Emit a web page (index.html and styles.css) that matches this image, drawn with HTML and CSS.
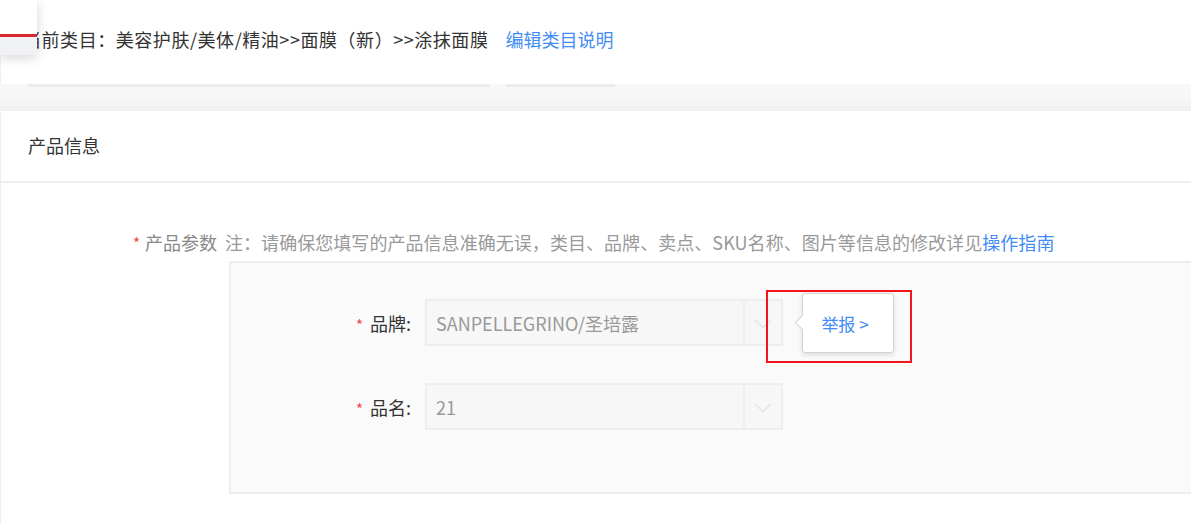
FILE: index.html
```html
<!DOCTYPE html>
<html lang="zh-CN">
<head>
<meta charset="utf-8">
<link rel="stylesheet" href="styles.css">
</head>
<body>
<div class="page">
  <div class="mini-window">
    <div class="mini-top"></div>
    <div class="mini-red"></div>
    <div class="mini-bottom"></div>
  </div>
  <section class="top">
    <div class="crumb">
      <span class="crumb-text">当前类目：美容护肤/美体/精油&gt;&gt;面膜（新）&gt;&gt;涂抹面膜</span>
      <a class="link crumb-link">编辑类目说明</a>
    </div>
  </section>
  <div class="band">
    <div class="bar bar-a"></div>
    <div class="bar bar-b"></div>
  </div>
  <section class="card">
    <div class="card-head">产品信息</div>
    <div class="card-body">
      <div class="note-row">
        <span class="req">*</span>
        <span class="note-label">产品参数</span>
        <span class="note">注：请确保您填写的产品信息准确无误，类目、品牌、卖点、SKU名称、图片等信息的修改详见<a class="link">操作指南</a></span>
      </div>
      <div class="panel">
        <div class="field">
          <div class="field-label"><span class="req">*</span> 品牌:</div>
          <div class="select">
            <div class="select-value">SANPELLEGRINO/圣培露</div>
            <div class="select-arrow">
              <svg width="18" height="10" viewBox="0 0 18 10"><path d="M1 1 L9 8.5 L17 1" fill="none" stroke="#e4e4e4" stroke-width="1.5"/></svg>
            </div>
          </div>
          <div class="annot"></div>
          <div class="pop">
            <span class="pop-arrow"></span>
            <a class="link pop-link">举报 &gt;</a>
          </div>
        </div>
        <div class="field">
          <div class="field-label"><span class="req">*</span> 品名:</div>
          <div class="select">
            <div class="select-value">21</div>
            <div class="select-arrow">
              <svg width="18" height="10" viewBox="0 0 18 10"><path d="M1 1 L9 8.5 L17 1" fill="none" stroke="#e4e4e4" stroke-width="1.5"/></svg>
            </div>
          </div>
        </div>
      </div>
    </div>
  </section>
</div>
</body>
</html>
```

FILE: styles.css
```css
* { box-sizing: border-box; }
html, body { margin: 0; padding: 0; background: #fff; }
body {
  font-family: "Microsoft YaHei", "Noto Sans CJK SC", "Noto Sans", sans-serif;
  font-size: 18px;
  color: #333;
  overflow: hidden;
}
.page { position: relative; width: 1191px; height: 524px; overflow: hidden; }

.mini-window {
  position: absolute;
  left: 0; top: 0;
  width: 37px; height: 55px;
  background: #fff;
  border-bottom-right-radius: 4px;
  box-shadow: 0 3px 12px rgba(0,0,0,0.16);
  overflow: hidden;
  display: flex;
  flex-direction: column;
  z-index: 5;
}
.mini-top { height: 34px; background: #fff; }
.mini-red { height: 3px; background: #d9262c; }
.mini-bottom { flex: 1; background: #f0f1f5; }

.top {
  height: 84px;
  background: #fff;
  border-left: 1px solid #eee;
}
.crumb {
  height: 77px;
  display: flex;
  align-items: center;
  padding-left: 22px;
  white-space: nowrap;
}
.crumb-text { color: #333; letter-spacing: 0.55px; }
.crumb-link { margin-left: 17px; }
.link { color: #3f8cf5; text-decoration: none; }

.band {
  height: 27px;
  background: linear-gradient(#f8f8f8, #f6f6f6 60%, #efefef);
  display: flex;
  align-items: flex-start;
  gap: 16px;
  padding-left: 28px;
}
.bar { height: 3px; background: #ececec; }
.bar-a { width: 462px; }
.bar-b { width: 109px; }

.card {
  background: #fff;
  border-left: 1px solid #eee;
  height: 413px;
}
.card-head {
  height: 72px;
  display: flex;
  align-items: center;
  padding-left: 27px;
  padding-bottom: 2px;
  border-bottom: 2px solid #eee;
  color: #333;
}
.card-body { padding-top: 46px; }

.note-row {
  display: flex;
  align-items: center;
  padding-left: 132px;
  height: 26px;
  white-space: nowrap;
  color: #999;
}
.req { color: #f04646; font-size: 15px; margin-right: 5px; }
.field-label .req { margin-right: 3px; }
.note-label { color: #888; }
.note { margin-left: 8px; color: #999; letter-spacing: 0.05px; }

.panel {
  margin-left: 228px;
  margin-top: 6px;
  height: 233px;
  border: 2px solid #eee;
  border-right: none;
  background: #fafafa;
  padding-top: 36px;
  display: flex;
  flex-direction: column;
  gap: 37px;
}
.field {
  position: relative;
  display: flex;
  align-items: center;
  height: 47px;
}
.field-label {
  width: 180px;
  text-align: right;
  color: #333;
  margin-right: 14px;
  white-space: nowrap;
}
.select {
  width: 358px;
  height: 47px;
  border: 2px solid #eee;
  background: #f7f7f7;
  display: flex;
}
.select-value {
  flex: 1;
  display: flex;
  align-items: center;
  padding-left: 9px;
  color: #999;
}
.select-arrow {
  width: 38px;
  border-left: 2px solid #eee;
  display: flex;
  align-items: center;
  justify-content: center;
  padding-top: 2px;
}

.annot {
  position: absolute;
  left: 535px;
  top: -9px;
  width: 146px;
  height: 73px;
  border: 2px solid #f2151b;
}
.pop {
  position: absolute;
  left: 571px;
  top: -6px;
  width: 92px;
  height: 60px;
  background: #fff;
  border: 1px solid #d4d4d4;
  border-radius: 3px;
  box-shadow: 0 2px 5px rgba(0,0,0,0.12);
  display: flex;
  align-items: center;
  justify-content: center;
}
.pop-arrow {
  position: absolute;
  left: -6px;
  top: 23px;
  width: 11px;
  height: 11px;
  background: #fff;
  border-left: 1px solid #d4d4d4;
  border-bottom: 1px solid #d4d4d4;
  transform: rotate(45deg);
}
.pop-link { font-size: 17px; position: relative; margin-right: 6px; }
```
